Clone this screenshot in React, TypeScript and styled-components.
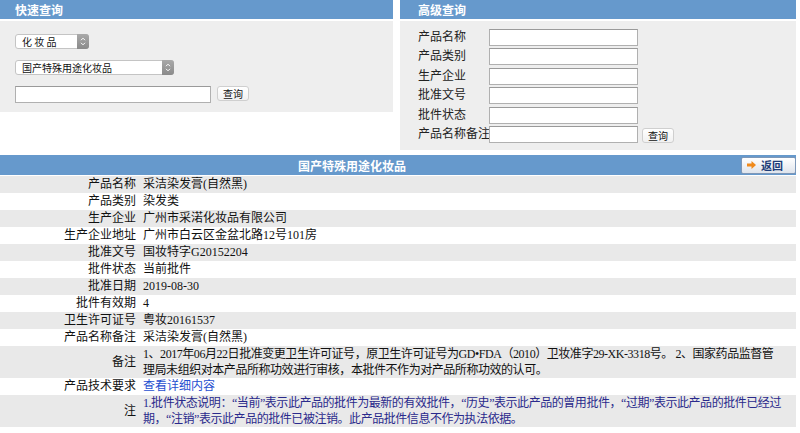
import { Fragment } from "react";
import styled, { createGlobalStyle } from "styled-components";

const GlobalStyle = createGlobalStyle`
  body {
    margin: 0;
    background: #ffffff;
    font-family: "Liberation Serif", "Noto Sans CJK SC", serif;
    font-size: 12px;
    color: #111;
  }
`;

const Page = styled.div`
  width: 796px;
`;

const TopRow = styled.div`
  display: flex;
  gap: 7px;
  height: 150px;
  align-items: flex-start;
`;

const Panel = styled.div<{ $width: number }>`
  width: ${(p) => p.$width}px;
  display: flex;
  flex-direction: column;
`;

const PanelHeader = styled.div<{ $indent: number }>`
  height: 19px;
  line-height: 19px;
  margin-bottom: 2px;
  padding-left: ${(p) => p.$indent}px;
  background: #6699cc;
  color: #fff;
  font-family: "Noto Sans CJK SC", sans-serif;
  font-weight: bold;
  font-size: 12px;
`;

const QuickBody = styled.div`
  background: #eeeeee;
  padding: 13px 15px 9px;
  display: flex;
  flex-direction: column;
  gap: 11px;
`;

const SelectWrap = styled.div<{ $width: number }>`
  position: relative;
  width: ${(p) => p.$width}px;
  height: 15px;
`;

const Select = styled.select`
  appearance: none;
  width: 100%;
  height: 15px;
  margin: 0;
  padding: 0 0 0 6px;
  border: 1px solid #c4c4c4;
  border-radius: 3px;
  background: #fff;
  font-family: "Noto Sans CJK SC", sans-serif;
  font-size: 10px;
  line-height: 13px;
  color: #111;
`;

const SelectArrow = styled.span`
  position: absolute;
  top: 0;
  right: 0;
  width: 12px;
  height: 15px;
  border-radius: 0 3px 3px 0;
  background: linear-gradient(#a9a9a9, #8a8a8a);
  display: flex;
  align-items: center;
  justify-content: center;
  pointer-events: none;
`;

const SearchRow = styled.div`
  display: flex;
  align-items: flex-start;
  gap: 6px;
`;

const TextInput = styled.input<{ $width: number }>`
  box-sizing: border-box;
  width: ${(p) => p.$width}px;
  height: 17px;
  margin: 0;
  padding: 0 2px;
  border: 1px solid #b0b0b0;
  border-top-color: #9a9a9a;
  background: #fff;
  font-size: 11px;
`;

const SmallButton = styled.button`
  box-sizing: border-box;
  width: 32px;
  height: 15px;
  margin: 0;
  padding: 0;
  border: 1px solid #cfcfcf;
  border-radius: 3px;
  background: linear-gradient(#ffffff, #f1f1f1);
  font-family: "Noto Sans CJK SC", sans-serif;
  font-size: 10px;
  line-height: 13px;
  color: #111;
`;

const AdvBody = styled.div`
  background: #eeeeee;
  padding: 8px 0 6px 18px;
  display: grid;
  grid-template-columns: 71px 149px auto;
  grid-auto-rows: 17px;
  row-gap: 2.4px;
  align-items: center;
  height: 129px;
  box-sizing: border-box;
`;

const AdvLabel = styled.label`
  grid-column: 1;
  white-space: nowrap;
  overflow: hidden;
  font-size: 12px;
  line-height: 17px;
  color: #222;
`;

const AdvButton = styled(SmallButton)`
  margin-left: 4px;
  margin-top: 2px;
`;

const DetailHeader = styled.div`
  margin-top: 5px;
  height: 20px;
  margin-bottom: 1px;
  background: #6699cc;
  display: flex;
  align-items: center;
`;

const DetailTitle = styled.div`
  flex: 1;
  text-align: center;
  color: #fff;
  font-family: "Noto Sans CJK SC", sans-serif;
  font-weight: bold;
  font-size: 12px;
`;

const HeaderTools = styled.div`
  width: 92px;
  display: flex;
  justify-content: flex-end;
`;

const BackButton = styled.button`
  box-sizing: border-box;
  width: 55px;
  height: 17px;
  margin: 0;
  padding: 0 0 0 5px;
  display: flex;
  align-items: center;
  gap: 5px;
  border: 1px solid #7d97b8;
  border-radius: 2px;
  background: linear-gradient(#ffffff, #dfe4ec);
  font-family: "Noto Sans CJK SC", sans-serif;
  font-weight: bold;
  font-size: 11px;
  color: #1d3c78;
`;

const InfoRow = styled.div<{ $shade: boolean }>`
  display: grid;
  grid-template-columns: 140px 1fr;
  align-items: center;
  background: ${(p) => (p.$shade ? "#e9e9e9" : "#ffffff")};
  min-height: 17px;
`;

const InfoLabel = styled.div`
  text-align: right;
  padding-right: 4px;
  line-height: 17px;
  color: #111;
`;

const InfoValue = styled.div<{ $tone?: "link" | "note"; $tight?: boolean }>`
  padding: 0 4px 0 3px;
  line-height: ${(p) => (p.$tight ? "16px" : "17px")};
  min-height: 17px;
  display: flex;
  flex-direction: column;
  justify-content: center;
  letter-spacing: ${(p) => (p.$tight ? "-0.45px" : "0")};
  color: ${(p) =>
    p.$tone === "link" ? "#1f4fd0" : p.$tone === "note" ? "#2a2a8c" : "#111"};
`;

const Line = styled.span`
  white-space: nowrap;
`;

const ArrowIcon = () => (
  <svg width="9" height="8" viewBox="0 0 9 8">
    <path d="M0 2.5h4.5V0L9 4 4.5 8V5.5H0z" fill="#f08a1c" />
  </svg>
);

const UpDown = () => (
  <svg width="6" height="9" viewBox="0 0 6 9">
    <path d="M1 3.2L3 1.2L5 3.2M1 5.8L3 7.8L5 5.8" stroke="#fff" strokeWidth="1" fill="none" />
  </svg>
);

const advFields = ["产品名称", "产品类别", "生产企业", "批准文号", "批件状态", "产品名称备注"];

type Info = { label: string; lines: string[]; tone?: "link" | "note" };

const info: Info[] = [
  { label: "产品名称", lines: ["采洁染发膏(自然黑)"] },
  { label: "产品类别", lines: ["染发类"] },
  { label: "生产企业", lines: ["广州市采渃化妆品有限公司"] },
  { label: "生产企业地址", lines: ["广州市白云区金盆北路12号101房"] },
  { label: "批准文号", lines: ["国妆特字G20152204"] },
  { label: "批件状态", lines: ["当前批件"] },
  { label: "批准日期", lines: ["2019-08-30"] },
  { label: "批件有效期", lines: ["4"] },
  { label: "卫生许可证号", lines: ["粤妆20161537"] },
  { label: "产品名称备注", lines: ["采洁染发膏(自然黑)"] },
  {
    label: "备注",
    lines: [
      "1、2017年06月22日批准变更卫生许可证号，原卫生许可证号为GD•FDA（2010）卫妆准字29-XK-3318号。 2、国家药品监督管",
      "理局未组织对本产品所称功效进行审核，本批件不作为对产品所称功效的认可。",
    ],
  },
  { label: "产品技术要求", lines: ["查看详细内容"], tone: "link" },
  {
    label: "注",
    lines: [
      "1.批件状态说明：“当前”表示此产品的批件为最新的有效批件，“历史”表示此产品的曾用批件，“过期”表示此产品的批件已经过",
      "期，“注销”表示此产品的批件已被注销。此产品批件信息不作为执法依据。",
    ],
    tone: "note",
  },
];

export default function App() {
  return (
    <Page>
      <GlobalStyle />
      <TopRow>
        <Panel $width={393}>
          <PanelHeader $indent={15}>快速查询</PanelHeader>
          <QuickBody>
            <SelectWrap $width={74}>
              <Select defaultValue="hzp">
                <option value="hzp">化 妆 品</option>
              </Select>
              <SelectArrow>
                <UpDown />
              </SelectArrow>
            </SelectWrap>
            <SelectWrap $width={159}>
              <Select defaultValue="gc">
                <option value="gc">国产特殊用途化妆品</option>
              </Select>
              <SelectArrow>
                <UpDown />
              </SelectArrow>
            </SelectWrap>
            <SearchRow>
              <TextInput $width={196} />
              <SmallButton>查询</SmallButton>
            </SearchRow>
          </QuickBody>
        </Panel>
        <Panel $width={396}>
          <PanelHeader $indent={18}>高级查询</PanelHeader>
          <AdvBody>
            {advFields.map((f, i) => (
              <Fragment key={f}>
                <AdvLabel>{f}</AdvLabel>
                <TextInput $width={149} />
                {i === advFields.length - 1 && <AdvButton>查询</AdvButton>}
              </Fragment>
            ))}
          </AdvBody>
        </Panel>
      </TopRow>
      <DetailHeader>
        <DetailTitle>国产特殊用途化妆品</DetailTitle>
        <HeaderTools>
          <BackButton>
            <ArrowIcon />
            返回
          </BackButton>
        </HeaderTools>
      </DetailHeader>
      {info.map((row, i) => (
        <InfoRow key={row.label} $shade={i % 2 === 0}>
          <InfoLabel>{row.label}</InfoLabel>
          <InfoValue $tone={row.tone} $tight={row.lines.length > 1}>
            {row.lines.map((l) => (
              <Line key={l}>{l}</Line>
            ))}
          </InfoValue>
        </InfoRow>
      ))}
    </Page>
  );
}
